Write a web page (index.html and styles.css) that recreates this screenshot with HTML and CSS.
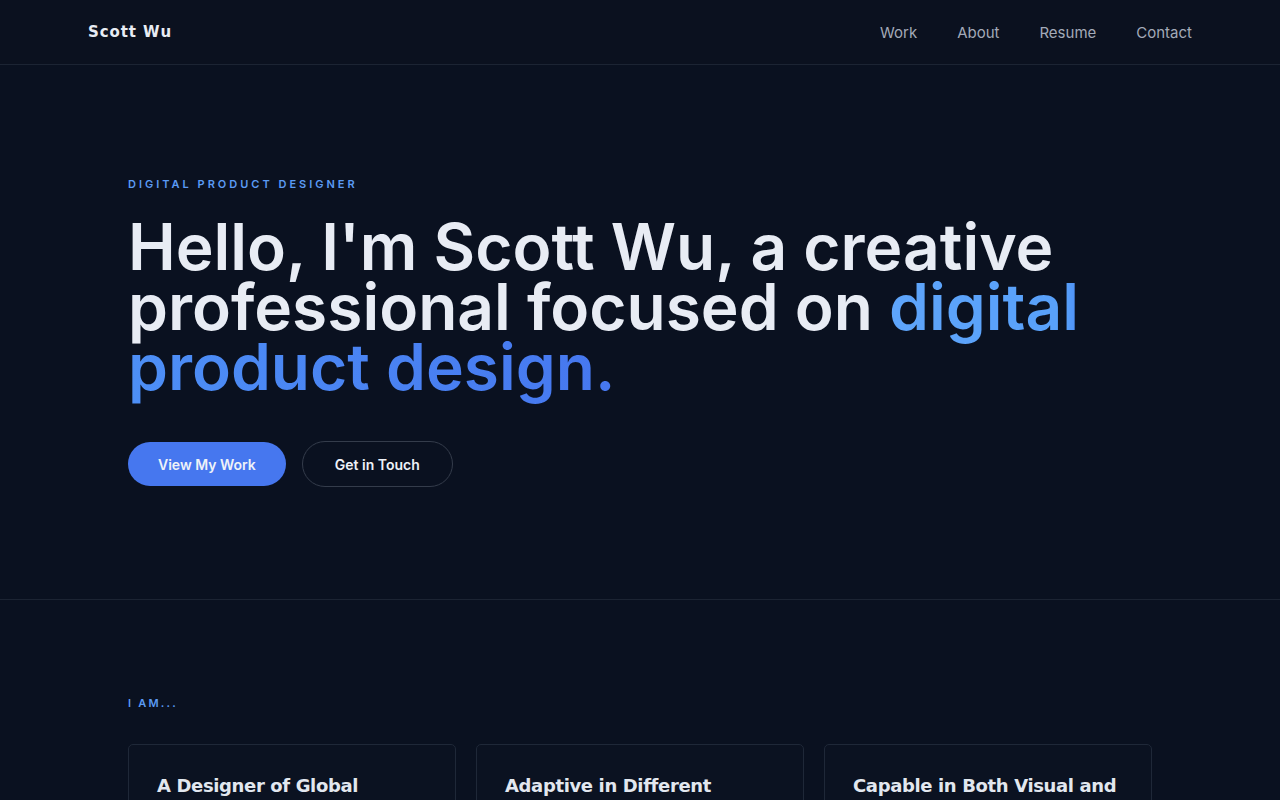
FILE: index.html
```html
<!DOCTYPE html>
<html lang="en">
<head>
<meta charset="utf-8">
<title>Scott Wu</title>
<link rel="stylesheet" href="styles.css">
</head>
<body>
<header class="site-header">
  <a class="logo" href="#">Scott Wu</a>
  <nav class="nav">
    <a href="#">Work</a>
    <a href="#">About</a>
    <a href="#">Resume</a>
    <a href="#">Contact</a>
  </nav>
</header>
<main>
  <section class="hero">
    <p class="eyebrow">DIGITAL PRODUCT DESIGNER</p>
    <h1 class="headline">Hello, I'm Scott Wu, a creative professional focused on <span class="accent">digital product design.</span></h1>
    <div class="actions">
      <a class="btn btn-primary" href="#">View My Work</a>
      <a class="btn btn-outline" href="#">Get in Touch</a>
    </div>
  </section>
  <section class="iam">
    <p class="eyebrow eyebrow-short">I AM...</p>
    <div class="cards">
      <article class="card"><h3 class="card-title">A Designer of Global Products</h3></article>
      <article class="card"><h3 class="card-title">Adaptive in Different Environments</h3></article>
      <article class="card"><h3 class="card-title">Capable in Both Visual and Interaction Design</h3></article>
    </div>
  </section>
</main>
</body>
</html>
```
FILE: styles.css
```css
* { box-sizing: border-box; }
html, body { margin: 0; padding: 0; }
body {
  background: #0a1120;
  color: #e6ebf3;
  font-family: Inter, "Liberation Sans", sans-serif;
  overflow: hidden;
}
a { text-decoration: none; color: inherit; }

.site-header {
  height: 65px;
  padding: 0 88px;
  display: flex;
  align-items: center;
  justify-content: space-between;
  border-bottom: 1px solid #1c2433;
  background: #0b111f;
}
.logo {
  font-family: "DejaVu Sans", sans-serif;
  font-weight: 700;
  font-size: 15px;
  letter-spacing: 0.9px;
  color: #e8ecf3;
}
.nav { display: flex; gap: 40px; }
.nav a {
  font-size: 15px;
  color: #a3aab8;
}

.hero {
  padding: 111px 128px 112px;
  border-bottom: 1px solid #1c2433;
}
.eyebrow {
  margin: 0;
  font-size: 11px;
  line-height: 16px;
  font-weight: 600;
  letter-spacing: 3px;
  color: #5b9bf4;
}
.eyebrow-short { letter-spacing: 2.2px; }
.headline {
  margin: 25px 0 0;
  max-width: 1010px;
  font-size: 64px;
  line-height: 60px;
  font-weight: 600;
  letter-spacing: 0;
  color: #e8ecf4;
}
.accent {
  background: linear-gradient(90deg, #5ea5fb 0%, #58a0f9 26%, #4d8ff6 28%, #4677ef 100%);
  -webkit-background-clip: text;
  background-clip: text;
  color: transparent;
}
.actions {
  margin-top: 44px;
  display: flex;
  align-items: center;
  gap: 16px;
}
.btn {
  display: inline-flex;
  align-items: center;
  height: 44px;
  padding: 0 30px;
  border-radius: 22px;
  font-size: 14px;
  font-weight: 600;
  color: #eef2f8;
}
.btn-primary { background: #4677ef; }
.btn-outline {
  height: 46px;
  border: 1px solid #343c4b;
  border-radius: 23px;
  padding: 0 32px;
}

.iam { padding: 95px 128px 0; }
.iam .eyebrow { margin-bottom: 33px; }
.cards {
  display: grid;
  grid-template-columns: repeat(3, 328px);
  gap: 20px;
}
.card {
  border: 1px solid #1f2838;
  border-radius: 5px;
  background: #0b1221;
  padding: 28px;
  height: 200px;
}
.card-title {
  margin: 0;
  font-family: "DejaVu Sans", sans-serif;
  font-weight: 700;
  font-size: 18px;
  line-height: 25px;
  letter-spacing: -0.02em;
  color: #e2e7ef;
}
```
